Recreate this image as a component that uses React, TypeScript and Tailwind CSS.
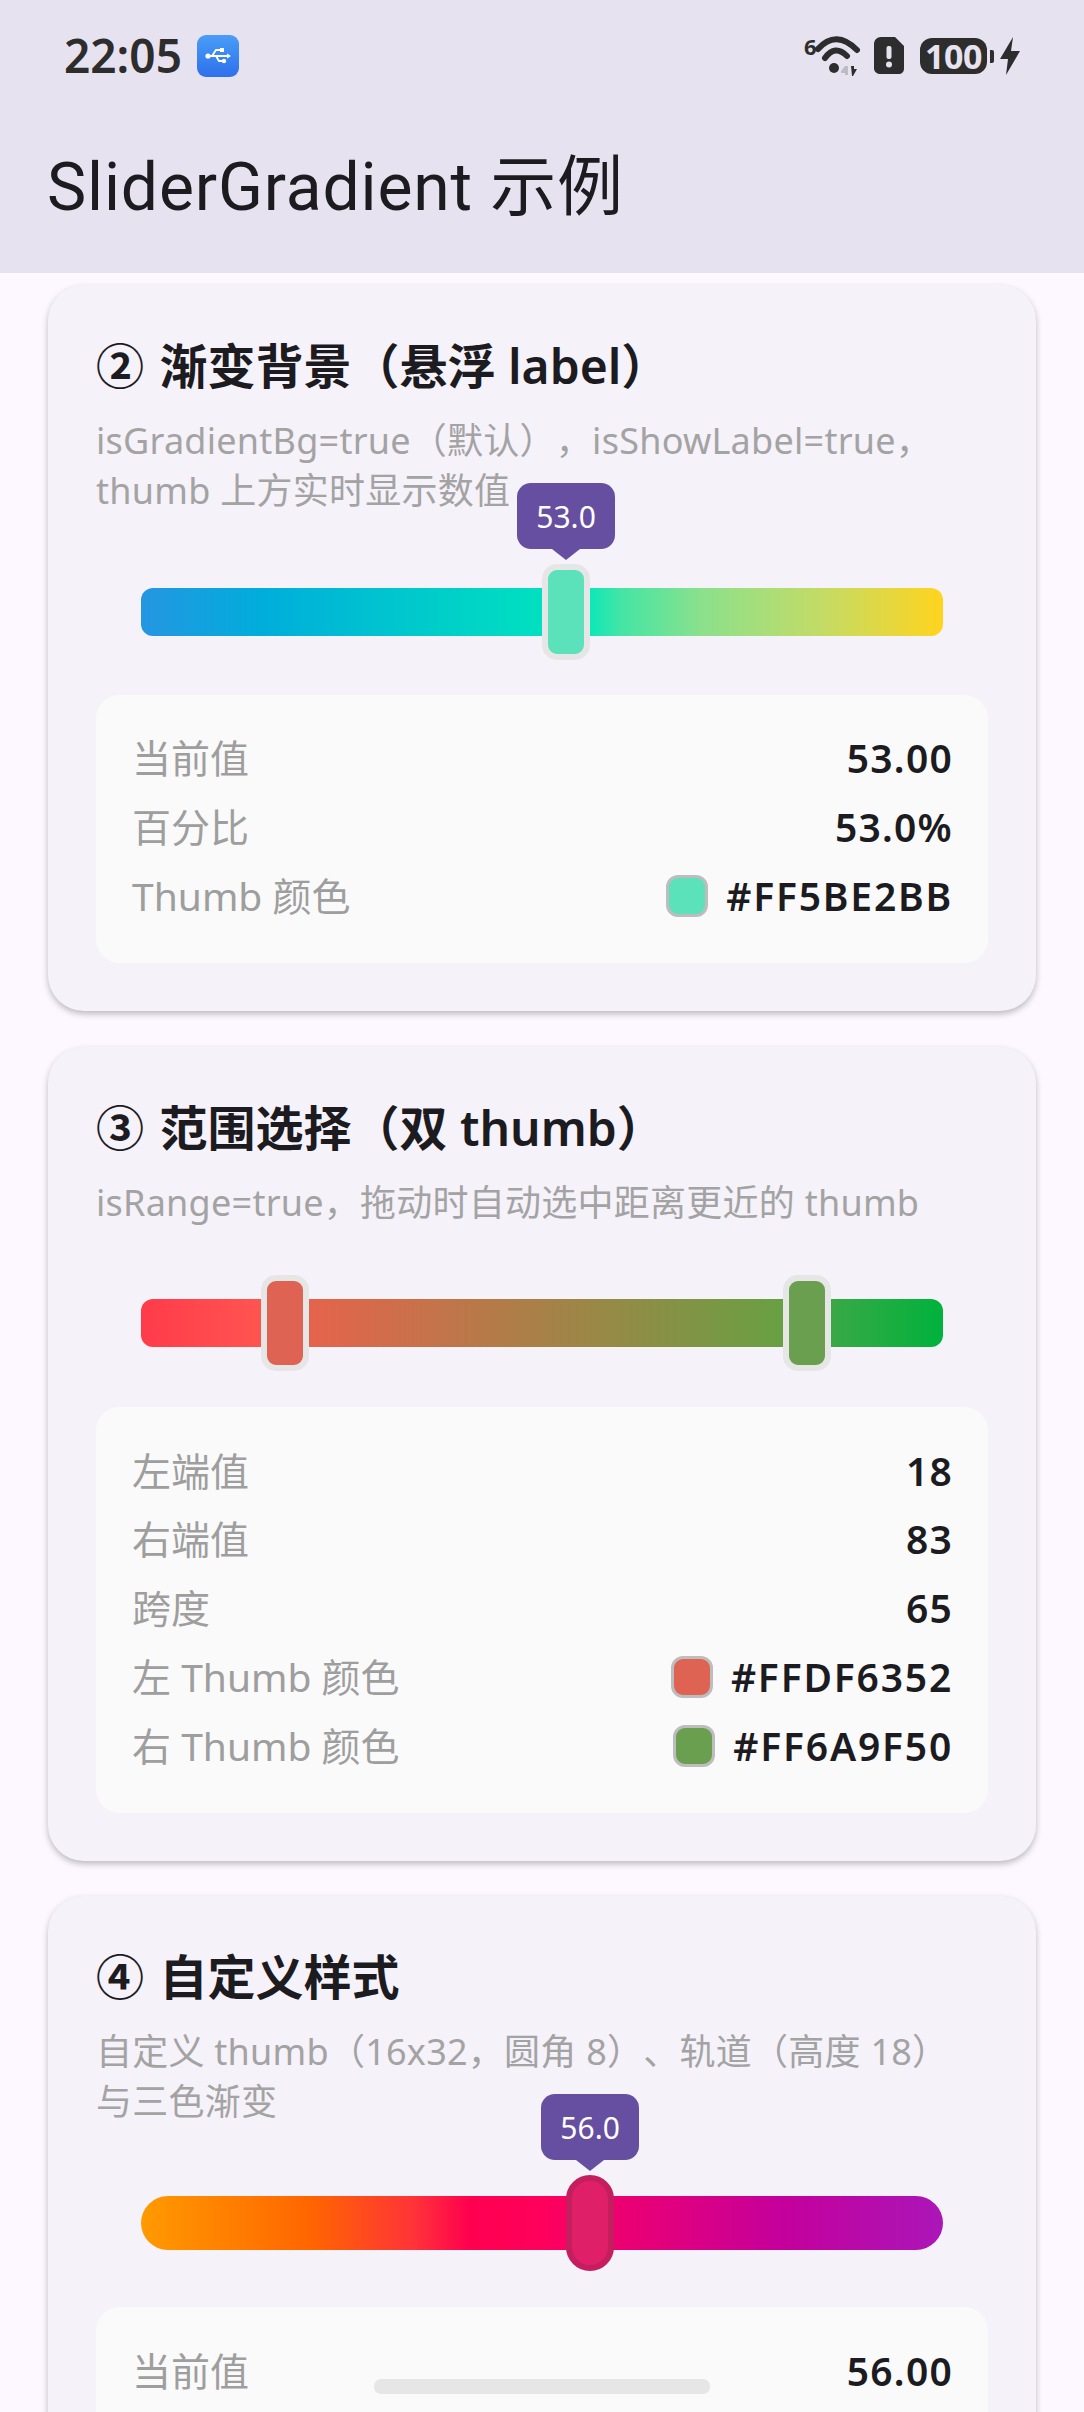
import React from "react";

const FONT = "font-['Noto_Sans','Noto_Sans_CJK_SC',sans-serif]";

function Bubble({ text, left }: { text: string; left: string }) {
  return (
    <div className="absolute bottom-[100%] mb-[4px] -translate-x-1/2 flex flex-col items-center" style={{ left }}>
      <div className="w-[98px] h-[66px] rounded-[14px] bg-[#664FA0] flex items-center justify-center text-white text-[30px]">
        {text}
      </div>
      <svg width="28" height="11" viewBox="0 0 28 11" className="block">
        <path d="M0 0H28L14 11Z" fill="#664FA0" />
      </svg>
    </div>
  );
}

function Thumb({ left, color }: { left: string; color: string }) {
  return (
    <div
      className="absolute top-0 w-[48px] h-[96px] -translate-x-1/2 rounded-[15px] border-[6px] border-[#E6E6E6]"
      style={{ left, backgroundColor: color }}
    />
  );
}

function Row({ label, value, swatch }: { label: string; value: string; swatch?: string }) {
  return (
    <div className="flex items-center justify-between h-[68.8px]">
      <span className="text-[39px] text-[#9E9E9E]">{label}</span>
      <span className="flex items-center gap-[18px]">
        {swatch && (
          <span className="w-[42px] h-[42px] rounded-[12px] border-[3px] border-[#BDBDBD]" style={{ backgroundColor: swatch }} />
        )}
        <span className={`text-[39px] font-semibold -mr-[1px] text-[#1C1B1F] ${swatch ? "tracking-[1.8px]" : "tracking-[1.25px]"}`}>{value}</span>
      </span>
    </div>
  );
}

function Card({ num, title, desc, children, rows, mt }: { num: string; title: string; desc: string[]; children: React.ReactNode; rows: React.ReactNode; mt: string }) {
  return (
    <section className={`${mt} mx-[48px] rounded-[36px] bg-[#F6F2FA] px-[48px] pt-[46px] pb-[48px] shadow-[0_3px_6px_rgba(0,0,0,0.25)]`}>
      <h2 className="text-[48px] leading-[70px] font-semibold text-[#1C1B1F]">
        <span className="mr-[3px]">{num}</span> {title}
      </h2>
      <div className="mt-[15px] text-[36px] leading-[50px] tracking-[0.25px] text-[#A3A3A3]">
        {desc.map((d) => (
          <div key={d}>{d}</div>
        ))}
      </div>
      {children}
      <div className="rounded-[24px] bg-[#FAFAFA] px-[36px] pt-[29px] pb-[33px]">{rows}</div>
    </section>
  );
}

function WifiIcon() {
  return (
    <div className="relative w-[60px] h-[40px]">
      <span className="absolute left-0 top-0 text-[22px] leading-[20px] font-bold text-[#2D2D2D]">6</span>
      <svg width="60" height="40" viewBox="0 0 60 40" className="block">
        <path d="M14 13Q32 -7 53 14" fill="none" stroke="#2D2D2D" strokeWidth="6" strokeLinecap="round" />
        <path d="M21 22Q31 8 43 20" fill="none" stroke="#2D2D2D" strokeWidth="6" strokeLinecap="round" />
        <circle cx="30" cy="32" r="5" fill="#2D2D2D" />
        <path d="M47 30h3v3h3l-4 7h-1z" fill="#2D2D2D" />
        <path d="M37 35l4-5h3v9h-3v-2h-4z" fill="#BDBBC4" />
      </svg>
    </div>
  );
}

export default function App() {
  return (
    <div className={`${FONT} [text-spacing-trim:space-all] relative h-[2412px] w-[1084px] overflow-hidden bg-[#FDF7FF]`}>
      <header className="h-[273px] bg-[#E7E2F0] relative">
        <div className="flex items-center justify-between pl-[64px] pr-[64px] pt-[35px] h-[77px]">
          <div className="flex items-center gap-[15px]">
            <span className="text-[46px] leading-[42px] pb-[2px] font-semibold text-[#2D2D2D]">22:05</span>
            <span className="w-[42px] h-[42px] rounded-[9px] bg-gradient-to-b from-[#4A9DF7] to-[#2F6FEC] flex items-center justify-center">
              <svg width="26" height="18" viewBox="0 0 26 18">
                <path d="M1 9H24M7 9L11 3H16M11 9L14 14H18" fill="none" stroke="#fff" strokeWidth="1.8" />
                <circle cx="3" cy="9" r="2.6" fill="#fff" />
                <rect x="15" y="1" width="4" height="4" fill="#fff" />
                <circle cx="19" cy="14" r="2.2" fill="#fff" />
                <path d="M22 6.5L26 9L22 11.5Z" fill="#fff" />
              </svg>
            </span>
          </div>
          <div className="flex items-center">
            <WifiIcon />
            <svg width="30" height="38" viewBox="0 0 30 38" className="ml-[10px] block">
              <path d="M7 0H21L30 9V31C30 35 28 37 24 37H7C3 37 0 35 0 31V7C0 3 3 0 7 0Z" fill="#2D2D2D" />
              <rect x="12.5" y="9" width="5" height="13" rx="2" fill="#E7E2F0" />
              <circle cx="15" cy="27.5" r="3" fill="#E7E2F0" />
            </svg>
            <div className="ml-[16px] w-[67px] h-[36px] rounded-[12px] bg-[#2D2D2D] flex items-center justify-center text-[#E7E2F0] text-[34px] leading-[36px] tracking-[-0.5px] font-bold">
              100
            </div>
            <div className="ml-[3px] w-[4px] h-[13px] rounded-r-[2px] bg-[#2D2D2D]" />
            <svg width="20" height="38" viewBox="0 0 20 38" className="ml-[6px] block">
              <path d="M13 0L0 22H8L6 38L20 14H11Z" fill="#2D2D2D" />
            </svg>
          </div>
        </div>
        <h1 className="absolute left-[47px] top-[144px] font-['Roboto','Noto_Sans_CJK_SC',sans-serif] text-[66px] leading-[88px] tracking-[0.85px] text-[#1C1B1F]">SliderGradient 示例</h1>
      </header>

      <Card
        mt="mt-[12px]"
        num="②"
        title="渐变背景（悬浮 label）"
        desc={["isGradientBg=true（默认），isShowLabel=true，", "thumb 上方实时显示数值"]}
        rows={
          <>
            <Row label="当前值" value="53.00" />
            <Row label="百分比" value="53.0%" />
            <Row label="Thumb 颜色" value="#FF5BE2BB" swatch="#5BE2BB" />
          </>
        }
      >
        <div className="relative mx-[45px] mt-[48px] mb-[35px] h-[96px]">
          <div className="absolute inset-x-0 top-[24px] h-[48px] rounded-[12px] bg-[linear-gradient(90deg,#2596E2_0%,#00ADDB_15%,#00E8BC_55%,#45E5A5_60%,#8CE08C_70%,#C4DB66_85%,#FFD41E_100%)]" />
          <Bubble text="53.0" left="53%" />
          <Thumb left="53%" color="#5BE2BB" />
        </div>
      </Card>

      <Card
        mt="mt-[36px]"
        num="③"
        title="范围选择（双 thumb）"
        desc={["isRange=true，拖动时自动选中距离更近的 thumb"]}
        rows={
          <>
            <Row label="左端值" value="18" />
            <Row label="右端值" value="83" />
            <Row label="跨度" value="65" />
            <Row label="左 Thumb 颜色" value="#FFDF6352" swatch="#DF6352" />
            <Row label="右 Thumb 颜色" value="#FF6A9F50" swatch="#6A9F50" />
          </>
        }
      >
        <div className="relative mx-[45px] mt-[47px] mb-[36px] h-[96px]">
          <div className="absolute inset-x-0 top-[24px] h-[48px] rounded-[12px] bg-[linear-gradient(90deg,#FF3B4A_0%,#FF5350_14%,#E5634C_21%,#68A043_80%,#35A945_87%,#00B23C_100%)]" />
          <Thumb left="18%" color="#DF6352" />
          <Thumb left="83%" color="#6A9F50" />
        </div>
      </Card>

      <Card
        mt="mt-[35px]"
        num="④"
        title="自定义样式"
        desc={["自定义 thumb（16x32，圆角 8）、轨道（高度 18）", "与三色渐变"]}
        rows={<Row label="当前值" value="56.00" />}
      >
        <div className="relative mx-[45px] mt-[48px] mb-[36px] h-[96px]">
          <div className="absolute inset-x-0 top-[21px] h-[54px] rounded-full bg-[linear-gradient(90deg,#FF9A00_0%,#FF6600_21%,#FF3338_34%,#FF0050_41%,#FF005C_50%,#C4009C_80%,#AB16B8_100%)]" />
          <Bubble text="56.0" left="56%" />
          <div className="absolute top-0 left-[56%] w-[48px] h-[96px] -translate-x-1/2 rounded-[24px] border-[6px] border-[#C41E5E] bg-[#DF2068]" />
        </div>
      </Card>

      <div className="absolute left-[374px] top-[2379px] h-[15px] w-[336px] rounded-[7px] bg-[#E6E6E6]" />
    </div>
  );
}
